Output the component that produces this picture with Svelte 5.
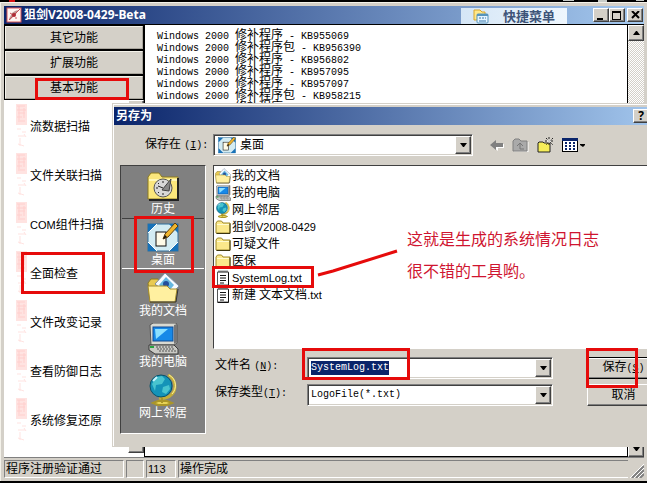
<script>
  import { onMount } from 'svelte';

  let groups = ['其它功能', '扩展功能', '基本功能'];
  let tasks = ['流数据扫描', '文件关联扫描', 'COM组件扫描', '全面检查', '文件改变记录', '查看防御日志', '系统修复还原'];
  let patches = [
    { kind: '修补程序', kb: 'KB955069' },
    { kind: '修补程序包', kb: 'KB956390' },
    { kind: '修补程序', kb: 'KB956802' },
    { kind: '修补程序', kb: 'KB957095' },
    { kind: '修补程序', kb: 'KB957097' },
    { kind: '修补程序包', kb: 'KB958215' },
    { kind: '修补程序', kb: 'KB958644' },
  ];
  let places = [
    { name: '历史', icon: 'history' },
    { name: '桌面', icon: 'desktop' },
    { name: '我的文档', icon: 'docs' },
    { name: '我的电脑', icon: 'computer' },
    { name: '网上邻居', icon: 'network' },
  ];
  let files = [
    { name: '我的文档', icon: 'docs' },
    { name: '我的电脑', icon: 'computer' },
    { name: '网上邻居', icon: 'network' },
    { name: '狙剑V2008-0429', icon: 'folder' },
    { name: '可疑文件', icon: 'folder' },
    { name: '医保', icon: 'folder' },
    { name: 'SystemLog.txt', icon: 'text' },
    { name: '新建 文本文档.txt', icon: 'text' },
  ];

  let place = '桌面';
  let fileName = 'SystemLog.txt';
  let nameInput;

  // splits a label into latin and chinese runs, each has its own font size
  function runs(text) {
    return text.match(/[\w.-]+|[^\w.-]+/g);
  }

  onMount(() => {
    nameInput.focus();
    nameInput.select();
  });
</script>

{#snippet mixed(text)}{#each runs(text) as r}{#if /\w/.test(r)}<span class="small">{r}</span>{:else}{r}{/if}{/each}{/snippet}

{#snippet icon(kind, size)}
  <svg class="icon" width={size} height={size} viewBox="0 0 32 32" aria-hidden="true">
    {#if kind == 'history'}
      <path d="M1 7l3-4h8l3 4h16v22H1z" fill="#fbe77c" stroke="#8c7a20" />
      <path d="M2 9h28v2H2z" fill="#fff8b8" />
      <path d="M31 8v22H2" fill="none" stroke="#222" stroke-width="2" />
      <circle cx="16" cy="18" r="9" fill="#d8d8d8" stroke="#555" />
      <path d="M16 11v2M16 23v2M9 18h2M21 18h2M11 13l1 1M11 23l1-1" stroke="#222" />
      <path d="M15 20l9-11-2 12z" fill="#888" stroke="#444" />
      <path d="M16 18l-5-2" stroke="#222" />
    {:else if kind == 'desktop'}
      <rect x="1" y="3" width="30" height="27" fill="#d3ecf3" stroke="#2f6f9c" />
      <path d="M1 3h9l-9 9zM31 30h-9l9-9zM1 30v-9l9 9zM31 3v9l-9-9z" fill="#1872b8" />
      <path d="M10 3l-9 9M31 21l-9 9M1 21l9 9" stroke="#fff" />
      <rect x="9" y="11" width="10" height="14" fill="#fffbe8" stroke="#111" stroke-width="1" />
      <path d="M16 18l2-5L28 2l3 3-10 11z" fill="#efb52e" stroke="#5d3e0c" />
      <path d="M16 18l2-4 2 2z" fill="#111" />
    {:else if kind == 'docs'}
      <path d="M1 11l3-4h7l3 4h14v19H3z" fill="#e8ca52" stroke="#8c7a20" />
      <path d="M8 12L18 1l14 13-9 10z" fill="#f7fbff" stroke="#7d8ca3" />
      <path d="M12 13l7-8 8 8-6 7z" fill="#66b7df" />
      <circle cx="19" cy="12" r="3" fill="#234e9c" />
      <path d="M1 14h19l3 3h7l-2 13H3z" fill="#fff0a0" stroke="#a58c2c" />
      <path d="M3 30h26l2-13" fill="none" stroke="#333" />
    {:else if kind == 'computer'}
      <path d="M3 2l3-2h23l1 2v18l-3 2H4z" fill="#d9d9d1" stroke="#555" />
      <path d="M27 2l3-1v18l-3 2z" fill="#777" />
      <rect x="6" y="4" width="20" height="14" fill="#1689e8" stroke="#124b91" />
      <path d="M8 6h13L9 16z" fill="#8ce0ff" />
      <path d="M2 22h25l4 4v5H8l-6-4z" fill="#c9c9c4" stroke="#3b3b3b" />
      <path d="M9 24h17M10 26h18M12 28h18" stroke="#555" stroke-dasharray="2 1" />
      <path d="M3 24h4" stroke="#28a340" stroke-width="2" />
    {:else if kind == 'network'}
      <path d="M21 1c8 4 9 15 3 20-3 3-7 4-12 3" fill="none" stroke="#c4ae39" stroke-width="3" />
      <path d="M22 1c8 4 8 14 3 19" fill="none" stroke="#fff3a0" />
      <circle cx="14" cy="12" r="11" fill="#1493b8" stroke="#0a5269" />
      <path d="M5 10l5-7 5-1 3 3-3 5-6 1-1 6zM16 13l6-2 1 4-4 5-4-2z" fill="#48c4cf" />
      <path d="M6 7l4-4" stroke="#c9f6ff" stroke-width="2" />
      <path d="M15 24v5M6 29l5-2h9l5 2-5 2h-9z" fill="#e7d356" stroke="#aa9528" stroke-width="2" />
    {:else if kind == 'folder'}
      <path d="M2 8l3-4h8l3 4h14v20H2z" fill="#fbe88b" stroke="#a08a2b" stroke-width="2" />
      <path d="M4 11h24" stroke="#fffbd0" stroke-width="2" />
      <path d="M30 9v20H3" fill="none" stroke="#3b3410" stroke-width="2" />
    {:else}
      <path d="M5 4h22v26H5z" fill="#fff" stroke="#555" stroke-width="2" />
      <path d="M27 5v26H5" fill="none" stroke="#111" stroke-width="2" />
      <path d="M7 3h18" stroke="#333" stroke-width="4" stroke-dasharray="2 2" />
      <path d="M10 11h12M10 16h12M10 21h12M10 26h8" stroke="#111" stroke-width="2" />
    {/if}
  </svg>
{/snippet}

{#snippet arrow(up)}
  <svg width="7" height="4" viewBox="0 0 7 4" aria-hidden="true"><path d={up ? 'M3 0h1l3 4H0z' : 'M0 0h7L4 4H3z'} /></svg>
{/snippet}

<div class="desktop">
  <div class="window">
    <header class="titlebar">
      <svg class="app-icon" width="16" height="16" viewBox="0 0 16 16" aria-hidden="true">
        <rect x="1" y="1" width="14" height="14" fill="#fff5f2" stroke="#d65454" />
        <path d="M3 12l3-6 3-2 3-1-2 4-2 2-4 4z" fill="#bd9593" />
        <path d="M4 6l3 2M3 13L14 2M9 11h2" stroke="#c9525a" />
        <circle cx="8" cy="8" r="2" fill="#b02a34" />
      </svg>
      <h1>狙剑V2008-0429-Beta</h1>
      <button class="quick">
        <svg width="18" height="16" viewBox="0 0 18 16" aria-hidden="true">
          <path d="M2 2h6l2 2h3v8H2z" fill="#ffe88b" stroke="#d9a52c" />
          <rect x="5" y="6" width="11" height="9" rx="1" fill="#e5f4ff" stroke="#5795bd" />
          <path d="M5 7h11" stroke="#5795bd" stroke-width="2" />
          <path d="M7 10h2M10 10h2M13 10h1M7 13h7" stroke="#3979ad" />
        </svg>
        快捷菜单
      </button>
      <div class="controls">
        <button class="raised" aria-label="最小化"><svg width="10" height="9"><path d="M1 7h6v2H1z" /></svg></button>
        <button class="raised" aria-label="最大化"><svg width="10" height="9"><path d="M0 0h9v9H0zM1 2v6h7V2z" fill-rule="evenodd" /></svg></button>
        <button class="raised close" aria-label="关闭"><svg width="9" height="8"><path d="M1 0l7 7M8 0L1 7" stroke="#000" stroke-width="2" /></svg></button>
      </div>
    </header>

    <main>
      <nav>
        <div class="groups">
          {#each groups as g}
            <button class="group">{g}</button>
          {/each}
        </div>
        <div class="task-area">
          <ul class="tasks">
            {#each tasks as t}
              <li>
                <svg width="12" height="46" viewBox="0 0 12 46" aria-hidden="true">
                  <path d="M0 0h11v21H0z" fill="#ffe3e1" />
                  <path d="M1 2h8M1 6h9M2 9h7M1 13h5M2 17h7M3 2v14M8 4v10" stroke="#ffcfcd" />
                  <path d="M1 25h4M6 28h4M2 32h7M4 34v8M8 30l2 3M2 40l6 2" stroke="#ffe3e1" />
                </svg>
                <a href="#task">{@render mixed(t)}</a>
              </li>
            {/each}
          </ul>
          <div class="scroll">
            <button class="raised" aria-label="向上">{@render arrow(true)}</button>
            <button class="raised" aria-label="向下">{@render arrow(false)}</button>
          </div>
        </div>
      </nav>
      <div class="patches">
        {#each patches as p}
          <div>Windows 2000 <span class="han">{p.kind}</span> - {p.kb}</div>
        {/each}
      </div>
      <div class="scroll main-scroll">
        <button class="raised" aria-label="向上">{@render arrow(true)}</button>
        <button class="raised" aria-label="向下">{@render arrow(false)}</button>
      </div>
    </main>

    <footer>
      <span class="cell reg">程序注册验证通过</span>
      <span class="cell blank"></span>
      <span class="cell count"><span class="small">113</span></span>
      <span class="cell state">操作完成</span>
      <svg width="14" height="14" viewBox="0 0 14 14" aria-hidden="true">
        <path d="M2 14L14 2M6 14l8-8M10 14l4-4" stroke="#808080" stroke-width="2" />
        <path d="M0 14L14 0M4 14L14 4M8 14l6-6" stroke="#fff" />
      </svg>
    </footer>
  </div>

  <div class="dialog" role="dialog" aria-label="另存为">
    <header class="titlebar">
      <h2>另存为</h2>
      <div class="controls">
        <button class="raised help" aria-label="帮助">?</button>
        <button class="raised close" aria-label="关闭"><svg width="9" height="8"><path d="M1 0l7 7M8 0L1 7" stroke="#000" stroke-width="2" /></svg></button>
      </div>
    </header>

    <div class="lookin">
      <label for="folder">保存在 <span class="latin">(<u>I</u>):</span></label>
      <div class="combo">
        {@render icon('desktop', 18)}
        <select id="folder" bind:value={place}>
          {#each places as p}
            <option>{p.name}</option>
          {/each}
        </select>
        <span class="raised drop">{@render arrow(false)}</span>
      </div>
      <div class="tools">
        <button aria-label="后退">
          <svg width="14" height="12" viewBox="0 0 14 12"><path d="M2 7l6 5V9h6V5" fill="#fff" /><path d="M0 6l6-5v3h7v4H6v3z" fill="#808080" /></svg>
        </button>
        <button aria-label="向上一级">
          <svg width="17" height="14" viewBox="0 0 17 14"><path d="M2 14h14V4" fill="none" stroke="#fff" /><path d="M1 3l2-2h4l2 2h6v10H1z" fill="#aaa" stroke="#808080" /><path d="M8 5v6M5 8l3-3 3 3M8 11h4" fill="none" stroke="#777" /></svg>
        </button>
        <button aria-label="新建文件夹">
          <svg width="17" height="16" viewBox="0 0 17 16"><path d="M1 6l1-1h4l1 1h6v9H1z" fill="#f6ee59" stroke="#222" /><path d="M12 0v9M8 4h9M9 1l7 7M16 1L9 8" stroke="#222" stroke-dasharray="2 1" /><path d="M12 3v3M10 4h4" stroke="#fff" /></svg>
        </button>
        <button aria-label="查看">
          <svg width="24" height="14" viewBox="0 0 24 14"><path d="M0 0h16v14H0z" /><path d="M1 3h14v10H1z" fill="#fff" /><path d="M0 0h16v3H0z" fill="#0a246a" /><path d="M3 5h2M7 5h2M11 5h2M3 8h2M7 8h2M11 8h2M3 11h2M7 11h2M11 11h2" stroke="#0a246a" stroke-width="2" /><path d="M18 6h5v1l-2 2-3-2z" /></svg>
        </button>
      </div>
    </div>

    <div class="body">
      <div class="places">
        {#each places as p}
          <button class:active={p.name == place} on:click={() => (place = p.name)}>
            {@render icon(p.icon, 32)}
            <span>{p.name}</span>
          </button>
        {/each}
      </div>
      <div class="right">
        <ul class="files">
          {#each files as f}
            <li>{@render icon(f.icon, 16)}<span>{@render mixed(f.name)}</span></li>
          {/each}
        </ul>
        <div class="form">
          <label for="name">文件名 <span class="latin">(<u>N</u>):</span></label>
          <div class="combo">
            <input id="name" bind:this={nameInput} bind:value={fileName} />
            <span class="raised drop">{@render arrow(false)}</span>
          </div>
          <button class="push default">保存<span class="latin">(<u>S</u>)</span></button>
          <label for="type">保存类型<span class="latin">(<u>T</u>):</span></label>
          <div class="combo">
            <select id="type" class="latin">
              <option>LogoFile(*.txt)</option>
            </select>
            <span class="raised drop">{@render arrow(false)}</span>
          </div>
          <button class="push">取消</button>
        </div>
      </div>
    </div>
  </div>

  <!-- red marker strokes over both windows -->
  <svg class="marks" width="647" height="483" viewBox="0 0 647 483" aria-hidden="true">
    <path d="M9 0h6v2H9z" fill="#d81414" stroke="none" />
    <path d="M563 0h11v1h-11zM598 0h9v2h-9zM636 0h8v1h-8z" fill="#c8ccc8" stroke="none" />
    <rect x="36.5" y="79.5" width="91" height="19" />
    <rect x="22.5" y="253.5" width="81" height="39" />
    <rect x="135.5" y="217.5" width="57" height="54" />
    <rect x="213.5" y="267.5" width="99" height="19" />
    <rect x="303.5" y="349.5" width="105" height="29" />
    <rect x="587.5" y="349.5" width="49" height="37" />
    <path d="M318 275l15-4 64-20" />
  </svg>
  <p class="note">这就是生成的系统情况日志<br />很不错的工具哟。</p>
</div>

<style>
  :global(body) {
    margin: 0;
    background: #000;
  }
  .desktop {
    position: relative;
    display: flex;
    box-sizing: border-box;
    min-height: 100vh;
    padding: 2px 0;
    overflow: hidden;
    background: #000;
    color: #000;
    font: 12px/14px "Noto Sans", "Noto Sans CJK SC", sans-serif;
  }
  .desktop * {
    box-sizing: border-box;
  }
  button, input, select {
    margin: 0;
    padding: 0;
    border: 0;
    border-radius: 0;
    font: inherit;
    color: inherit;
    background: none;
  }
  svg {
    display: block;
    flex: none;
  }
  ul {
    margin: 0;
    padding: 0;
    list-style: none;
  }
  .latin {
    font: 10px/14px "Liberation Mono", monospace;
  }
  .small {
    font: 11px/14px "Liberation Sans", sans-serif;
  }
  .raised {
    display: flex;
    align-items: center;
    justify-content: center;
    flex: none;
    background: #d4d0c8;
    color: #000;
    border: 1px solid;
    border-color: #fff #404040 #404040 #fff;
    box-shadow: inset -1px -1px #808080;
  }

  .window {
    flex: 1;
    display: flex;
    flex-direction: column;
    min-width: 0;
    padding: 3px 3px 0 3px;
    background: #d4d0c8;
    border-top: 1px solid #f4f2ea;
    border-left: 1px solid #f4f2ea;
  }
  .titlebar {
    display: flex;
    align-items: center;
    height: 18px;
    background: linear-gradient(90deg, #0a246a, #a6caf0);
    color: #fff;
  }
  h1, h2 {
    margin: 0;
    font: bold 12px/18px "Noto Sans", "Noto Sans CJK SC", sans-serif;
    white-space: nowrap;
  }
  .app-icon {
    margin: 0 2px;
  }
  .quick {
    display: flex;
    align-items: center;
    gap: 13px;
    align-self: flex-end;
    width: 106px;
    height: 16px;
    margin-left: auto;
    padding-left: 11px;
    background: linear-gradient(90deg, #d5e6f6, #eef6fd);
    color: #3e5478;
    font: bold 13px/16px "Noto Sans CJK SC", sans-serif;
    white-space: nowrap;
  }
  .controls {
    display: flex;
    margin: 0 1px 0 26px;
  }
  .controls .raised {
    width: 16px;
    height: 14px;
  }
  .controls .close {
    margin-left: 2px;
  }

  main {
    flex: 1;
    display: flex;
    min-height: 0;
    border-top: 1px solid #000;
  }
  nav {
    display: flex;
    flex-direction: column;
    width: 141px;
    background: #fff;
    border-right: 1px solid #000;
  }
  .groups {
    display: flex;
    flex-direction: column;
    gap: 2px;
    padding: 1px;
    background: #000;
  }
  .group {
    height: 23px;
    background: #d4d0c8;
    border: 1px solid;
    border-color: #f4f2ea #aaa69e #aaa69e #f4f2ea;
  }
  .task-area {
    flex: 1;
    display: flex;
    padding-bottom: 4px;
  }
  .tasks {
    flex: 1;
    padding: 2px 0 0 12px;
  }
  .tasks li {
    display: flex;
    align-items: center;
    gap: 2px;
    height: 49px;
  }
  .tasks a {
    color: #000;
    text-decoration: none;
    white-space: nowrap;
  }
  .scroll {
    display: flex;
    flex-direction: column;
    justify-content: space-between;
    width: 16px;
    background: repeating-conic-gradient(#fff 0 25%, #d4d0c8 0 50%) 0 0 / 2px 2px;
  }
  .scroll .raised {
    height: 16px;
  }
  .patches {
    flex: 1;
    padding: 3px 12px;
    background: #fff;
    border-bottom: 1px solid #000;
    font: 10px/12px "Liberation Mono", monospace;
    white-space: nowrap;
  }
  .patches div {
    height: 12px;
  }
  .han {
    font: 12px/12px "Noto Sans CJK SC", sans-serif;
  }
  .main-scroll {
    width: 17px;
    border-left: 1px solid #000;
  }

  footer {
    display: flex;
    align-items: flex-end;
    gap: 2px;
    padding: 2px 0 3px;
    border-top: 1px solid #808080;
  }
  .cell {
    height: 18px;
    padding: 0 1px;
    border: 1px solid;
    border-color: #808080 #fff #fff #808080;
    line-height: 16px;
    white-space: nowrap;
  }
  .reg {
    width: 120px;
  }
  .blank {
    width: 18px;
  }
  .count {
    width: 30px;
  }
  .state {
    flex: 1;
    border-right: 0;
  }

  .dialog {
    position: absolute;
    top: 103px;
    left: 112px;
    right: -26px;
    padding: 2px 4px 12px 1px;
    background: #d4d0c8;
    border: 1px solid #d4d0c8;
    box-shadow: inset 1px 1px #fff;
  }
  .dialog .titlebar {
    margin-top: 1px;
  }
  .dialog h2 {
    flex: 1;
    padding-left: 2px;
  }
  .dialog .controls {
    margin: 0;
    padding: 0 1px;
  }
  .help {
    font-weight: bold;
  }
  .lookin {
    display: flex;
    align-items: center;
    padding: 9px 8px 9px 31px;
  }
  .lookin label {
    width: 68px;
    white-space: nowrap;
  }
  .lookin .combo {
    width: 260px;
  }
  .tools {
    display: flex;
    align-items: center;
    gap: 8px;
    margin-left: 17px;
  }
  .combo {
    display: flex;
    height: 22px;
    padding: 1px;
    align-items: center;
    background: #fff;
    border: 1px solid;
    border-color: #808080 #fff #fff #808080;
    box-shadow: inset 1px 1px #404040, inset -1px -1px #d4d0c8;
  }
  .combo .icon {
    margin: 0 2px 0 3px;
  }
  .combo select, .combo input {
    flex: 1;
    min-width: 0;
    padding: 0 2px;
    appearance: none;
    outline: none;
  }
  .combo input {
    font: 10px/14px "Liberation Mono", monospace;
  }
  .combo input::selection {
    background: #0a246a;
    color: #fff;
  }
  .combo .drop {
    width: 16px;
    height: 18px;
    margin-left: -16px;
    pointer-events: none;
  }

  .body {
    display: flex;
    gap: 7px;
    padding: 0 8px 0 6px;
  }
  .places {
    width: 86px;
    padding: 1px;
    background: #808080;
    border: 1px solid;
    border-color: #404040 #fff #fff #404040;
  }
  .places button {
    display: flex;
    flex-direction: column;
    align-items: center;
    width: 100%;
    height: 51px;
    padding-top: 3px;
    color: #fff;
  }
  .places .active {
    background: #8a8a8a;
    box-shadow: inset 0 1px #404040, inset 0 -1px #fff;
  }
  .right {
    flex: 1;
    min-width: 0;
  }
  .files {
    height: 184px;
    padding: 1px;
    background: #fff;
    border: 1px solid;
    border-color: #404040 #fff #fff #404040;
  }
  .files li {
    display: flex;
    align-items: center;
    gap: 1px;
    height: 17px;
    white-space: nowrap;
  }
  .form {
    display: grid;
    grid-template-columns: 92px 1fr 73px;
    gap: 5px 0;
    padding: 8px 0 28px 2px;
  }
  .form label {
    line-height: 16px;
  }
  .form .combo {
    margin-right: 34px;
  }
  .push {
    height: 22px;
    background: #d4d0c8;
    border: 1px solid;
    border-color: #fff #404040 #404040 #fff;
    box-shadow: inset -1px -1px #808080;
  }
  .default {
    border-color: #000;
    box-shadow: inset 1px 1px #fff, inset -1px -1px #808080;
  }

  .marks {
    position: absolute;
    top: 0;
    left: 0;
    fill: none;
    stroke: #e60b0b;
    stroke-width: 3;
    pointer-events: none;
  }
  .note {
    position: absolute;
    top: 222px;
    left: 407px;
    margin: 0;
    color: #cf1530;
    font: 16px/32px "Noto Sans CJK SC", sans-serif;
    white-space: nowrap;
  }
</style>
